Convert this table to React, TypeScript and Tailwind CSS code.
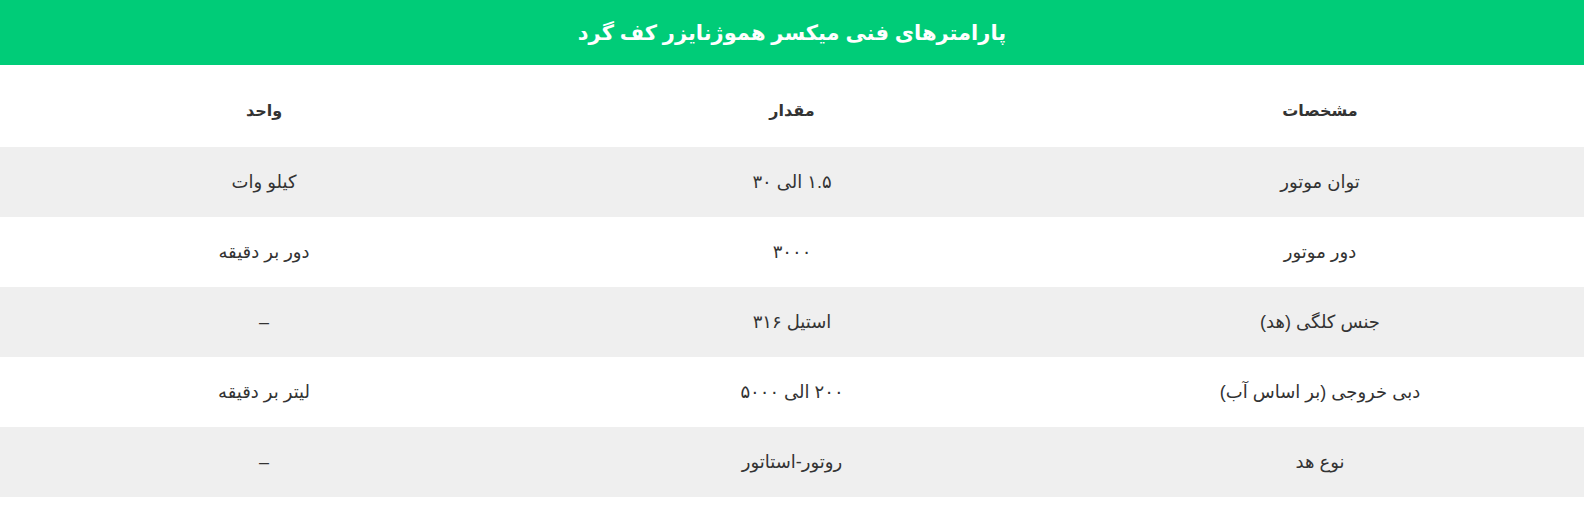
import React from "react";

const rows = [
  { spec: "توان موتور", value: "۱.۵ الی ۳۰", unit: "کیلو وات" },
  { spec: "دور موتور", value: "۳۰۰۰", unit: "دور بر دقیقه" },
  { spec: "جنس کلگی (هد)", value: "استیل ۳۱۶", unit: "–" },
  { spec: "دبی خروجی (بر اساس آب)", value: "۲۰۰ الی ۵۰۰۰", unit: "لیتر بر دقیقه" },
  { spec: "نوع هد", value: "روتور-استاتور", unit: "–" },
];

export default function App() {
  return (
    <main
      dir="rtl"
      className="w-full min-h-screen bg-white text-[#333]"
      style={{ fontFamily: '"Liberation Sans", Arial, "DejaVu Sans", sans-serif' }}
    >
      {/* Title bar */}
      <div className="h-[65px] bg-[#00cc78] flex items-center justify-center">
        <h2 className="text-[21px] font-bold text-white">
          پارامترهای فنی میکسر هموژنایزر کف گرد
        </h2>
      </div>

      <table className="w-full table-fixed border-collapse text-center">
        <thead>
          <tr className="h-[82px]">
            <th className="pt-[10px] text-[16px] font-bold">مشخصات</th>
            <th className="pt-[10px] text-[16px] font-bold">مقدار</th>
            <th className="pt-[10px] text-[16px] font-bold">واحد</th>
          </tr>
        </thead>
        <tbody>
          {rows.map((r, i) => (
            <tr key={i} className={`h-[70px] ${i % 2 === 0 ? "bg-[#efefef]" : "bg-white"}`}>
              <td className="text-[18px]">{r.spec}</td>
              <td className="text-[18px]">{r.value}</td>
              <td className="text-[18px]">{r.unit}</td>
            </tr>
          ))}
        </tbody>
      </table>
    </main>
  );
}
